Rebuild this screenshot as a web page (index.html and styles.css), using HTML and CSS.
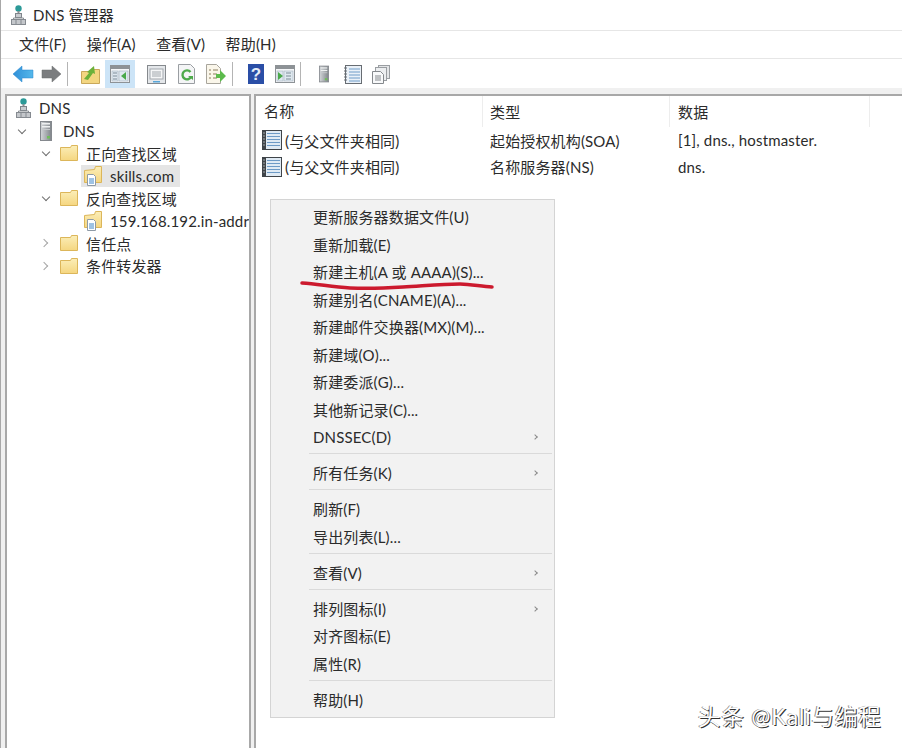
FILE: index.html
```html
<!DOCTYPE html>
<html lang="zh-CN">
<head>
<meta charset="UTF-8">
<meta name="viewport" content="width=device-width, initial-scale=1.0">
<title>DNS 管理器</title>
<link rel="stylesheet" href="styles.css">
</head>
<body>

<!-- Shared icons -->
<svg class="defs" width="0" height="0">
    <defs>
        <linearGradient id="folderFill" x1="0" y1="0" x2="0" y2="1">
            <stop offset="0" stop-color="#fbeeb8"/>
            <stop offset="1" stop-color="#f5d680"/>
        </linearGradient>
        <linearGradient id="blueFill" x1="0" y1="0" x2="1" y2="0">
            <stop offset="0" stop-color="#2f8fd8"/>
            <stop offset="1" stop-color="#55b8ea"/>
        </linearGradient>
        <linearGradient id="towerFill" x1="0" y1="0" x2="1" y2="0">
            <stop offset="0" stop-color="#d4d7da"/>
            <stop offset="1" stop-color="#7f8489"/>
        </linearGradient>
    </defs>
    <symbol id="i-network" viewBox="0 0 15 20">
        <circle cx="7.5" cy="3.5" r="3.2" fill="#2c9a98"/>
        <path d="M7.5 6v4" stroke="#8a8f94" stroke-width="2"/>
        <rect x="4.5" y="8.5" width="6" height="4" fill="#c9ccd0" stroke="#7f858b"/>
        <path d="M2.5 13v2M12.5 13v2M2.5 13h10" stroke="#8a8f94" fill="none"/>
        <rect x="0.5" y="14.5" width="14" height="5" fill="#c4c7cb" stroke="#858a90"/>
        <path d="M5 15v4M10 15v4" stroke="#858a90"/>
    </symbol>
    <symbol id="i-server" viewBox="0 0 12 20">
        <rect x="0.5" y="0.5" width="11" height="19" fill="url(#towerFill)" stroke="#85898e"/>
        <rect x="2" y="2" width="8" height="1.5" fill="#eef0f1"/>
        <rect x="2" y="5" width="8" height="1.5" fill="#eef0f1"/>
        <rect x="2" y="8" width="8" height="1" fill="#c6c9cc"/>
        <rect x="7" y="15" width="3" height="2.5" fill="#6fbf5a"/>
    </symbol>
    <symbol id="i-folder" viewBox="0 0 18 18">
        <path d="M0.5 3.5v13h17V1.5h-6l-1 2z" fill="url(#folderFill)" stroke="#dcb65a"/>
    </symbol>
    <symbol id="i-zone" viewBox="0 0 18 20">
        <path d="M0.5 4.5v12h17V0.5h-6l-1 3z" fill="url(#folderFill)" stroke="#dcb65a"/>
        <path d="M3.5 8.5h6l2 2v9h-8z" fill="#fff" stroke="#8e9aa6"/>
        <path d="M5 13h5M5 15h5M5 17h5" stroke="#3f86c8"/>
    </symbol>
    <symbol id="i-record" viewBox="0 0 20 20">
        <rect x="0.5" y="0.5" width="19" height="19" fill="#dfeaf4" stroke="#3f4449"/>
        <rect x="0" y="0" width="4" height="20" fill="#3f4449"/>
        <path d="M1 3h2M1 6h2M1 9h2M1 12h2M1 15h2" stroke="#a5a9ad"/>
        <path d="M5 3.5h13M5 6.5h13M5 9.5h13M5 12.5h13M5 15.5h13" stroke="#6d9ac6"/>
    </symbol>
    <symbol id="i-pane" viewBox="0 0 20 18">
        <rect x="0.5" y="0.5" width="19" height="17" fill="#f4f6f8" stroke="#8d9296"/>
        <rect x="1" y="1" width="18" height="3" fill="#8d9296"/>
        <rect x="2" y="6" width="6" height="10" fill="#dfe8f0" stroke="#a5b3bf" stroke-width="0.6"/>
        <rect x="9" y="6" width="9" height="10" fill="#dfe9ef" stroke="#a5b3bf" stroke-width="0.6"/>
    </symbol>
</svg>

<div class="window">

    <div class="titlebar">
        <svg class="title-icon"><use href="#i-network"/></svg>
        <span>DNS 管理器</span>
    </div>

    <div class="menubar">
        <span>文件(F)</span>
        <span>操作(A)</span>
        <span>查看(V)</span>
        <span>帮助(H)</span>
    </div>

    <div class="toolbar">
        <div class="tool">
            <svg width="22" height="18" viewBox="0 0 22 18"><path d="M1 9l9-8v4h11v8H10v4z" fill="url(#blueFill)" stroke="#2b86cc" stroke-width="0.5"/></svg>
        </div>
        <div class="tool">
            <svg width="21" height="18" viewBox="0 0 21 18"><path d="M20 9l-9-8v4H1v8h10v4z" fill="#7b7d7f" stroke="#6a6c6e" stroke-width="0.5"/></svg>
        </div>
        <div class="tool-sep"></div>
        <div class="tool">
            <svg width="19" height="20" viewBox="0 0 19 20">
                <path d="M0.5 7.5v12h18V5.5h-7l-1 2z" fill="#f3d681" stroke="#c9a85a"/>
                <path d="M3 15l5-6-2-1 7-6 1 8-2-1-5 7z" fill="#6cb13a"/>
            </svg>
        </div>
        <div class="tool active">
            <svg width="20" height="18"><use href="#i-pane"/><path d="M16 7v8l-5-4z" fill="#4aa94a"/><path d="M3 8h4M3 11h4M3 14h4" stroke="#7d8b97"/></svg>
        </div>
        <div class="tool wide gap">
            <svg width="19" height="19" viewBox="0 0 19 19">
                <rect x="0.5" y="0.5" width="18" height="18" fill="#e4e7ea" stroke="#85898d"/>
                <rect x="3" y="4" width="13" height="10" fill="#f5f6f7" stroke="#a2a8ad"/>
                <path d="M5 7h9M5 9h9M5 11h9" stroke="#a2a8ad"/>
                <rect x="6" y="16" width="7" height="1.5" fill="#58a6d8"/>
            </svg>
        </div>
        <div class="tool wide">
            <svg width="17" height="20" viewBox="0 0 17 20">
                <path d="M0.5 0.5h12l4 4v15H0.5z" fill="#f4f5f6" stroke="#9a9ea2"/>
                <path d="M12.5 8a4.5 4.5 0 1 0 0.5 5" fill="none" stroke="#4eaa4a" stroke-width="2.4"/>
                <path d="M10 12h5v4z" fill="#4eaa4a"/>
            </svg>
        </div>
        <div class="tool wide">
            <svg width="20" height="20" viewBox="0 0 20 20">
                <path d="M0.5 0.5h10l4 4v15H0.5z" fill="#faf6ea" stroke="#a8a59c"/>
                <path d="M3 6h2M7 6h5M3 10h2M7 10h4M3 14h2M7 14h4" stroke="#8a7d5c"/>
                <path d="M10 10h4V6l6 6-6 6v-4h-4z" fill="#5cbb4c"/>
            </svg>
        </div>
        <div class="tool-sep"></div>
        <div class="tool">
            <svg width="16" height="20" viewBox="0 0 16 20">
                <rect width="16" height="20" fill="#2A4EA6"/>
                <text class="help-mark" x="8" y="16">?</text>
            </svg>
        </div>
        <div class="tool">
            <svg width="20" height="18"><use href="#i-pane"/><path d="M3 7v8l5-4z" fill="#4aa94a"/><path d="M11 8h5M11 11h5M11 14h5" stroke="#7d8b97"/></svg>
        </div>
        <div class="tool-sep"></div>
        <div class="tool">
            <svg width="10" height="20"><use href="#i-server"/></svg>
        </div>
        <div class="tool">
            <svg width="18" height="19" viewBox="0 0 18 19">
                <rect x="1.5" y="0.5" width="16" height="18" fill="#eaf1f8" stroke="#676c72"/>
                <path d="M0 3h3M0 6h3M0 9h3M0 12h3M0 15h3" stroke="#676c72"/>
                <path d="M5 4h11M5 7h11M5 10h11M5 13h11M5 16h11" stroke="#6f9cc8"/>
            </svg>
        </div>
        <div class="tool last">
            <svg width="18" height="19" viewBox="0 0 18 19">
                <rect x="6.5" y="0.5" width="11" height="13" fill="#e3e5e7" stroke="#9a9ea2"/>
                <rect x="3.5" y="2.5" width="11" height="13" fill="#eceef0" stroke="#9a9ea2"/>
                <path d="M0.5 6.5h8l3 3v9H0.5z" fill="#f8f9fa" stroke="#85898d"/>
                <path d="M3 11h6M3 13h6M3 15h6" stroke="#85898d"/>
            </svg>
        </div>
    </div>

    <div class="panes">
        <div class="tree">
            <div class="tree-row">
                <svg class="ic-root"><use href="#i-network"/></svg>
                <span class="label-root">DNS</span>
            </div>
            <div class="tree-row">
                <span class="chev open chev-1"></span>
                <svg class="ic-server"><use href="#i-server"/></svg>
                <span class="label-server">DNS</span>
            </div>
            <div class="tree-row">
                <span class="chev open chev-2"></span>
                <svg class="ic-folder"><use href="#i-folder"/></svg>
                <span class="label-folder">正向查找区域</span>
            </div>
            <div class="tree-row">
                <div class="selected">
                    <svg class="ic-zone"><use href="#i-zone"/></svg>
                    <span class="label-zone">skills.com</span>
                </div>
            </div>
            <div class="tree-row">
                <span class="chev open chev-2"></span>
                <svg class="ic-folder"><use href="#i-folder"/></svg>
                <span class="label-folder">反向查找区域</span>
            </div>
            <div class="tree-row zone-row">
                <svg class="ic-zone"><use href="#i-zone"/></svg>
                <span class="label-zone">159.168.192.in-addr</span>
            </div>
            <div class="tree-row">
                <span class="chev closed chev-2"></span>
                <svg class="ic-folder"><use href="#i-folder"/></svg>
                <span class="label-folder">信任点</span>
            </div>
            <div class="tree-row">
                <span class="chev closed chev-2"></span>
                <svg class="ic-folder"><use href="#i-folder"/></svg>
                <span class="label-folder">条件转发器</span>
            </div>
        </div>

        <div class="list">
            <div class="list-head">
                <div class="col-name">名称</div>
                <div class="col-type">类型</div>
                <div class="col-data">数据</div>
            </div>
            <div class="list-row">
                <div class="col-name"><svg class="ic-record"><use href="#i-record"/></svg>(与父文件夹相同)</div>
                <div class="col-type">起始授权机构(SOA)</div>
                <div class="col-data">[1], dns., hostmaster.</div>
            </div>
            <div class="list-row">
                <div class="col-name"><svg class="ic-record"><use href="#i-record"/></svg>(与父文件夹相同)</div>
                <div class="col-type">名称服务器(NS)</div>
                <div class="col-data">dns.</div>
            </div>
        </div>
    </div>
</div>

<!-- Context menu -->
<div class="context-menu">
    <div class="item">更新服务器数据文件(U)</div>
    <div class="item">重新加载(E)</div>
    <div class="item">新建主机(A 或 AAAA)(S)...</div>
    <div class="item">新建别名(CNAME)(A)...</div>
    <div class="item">新建邮件交换器(MX)(M)...</div>
    <div class="item">新建域(O)...</div>
    <div class="item">新建委派(G)...</div>
    <div class="item">其他新记录(C)...</div>
    <div class="item sub">DNSSEC(D)</div>
    <div class="sep"></div>
    <div class="item sub">所有任务(K)</div>
    <div class="sep"></div>
    <div class="item">刷新(F)</div>
    <div class="item">导出列表(L)...</div>
    <div class="sep"></div>
    <div class="item sub">查看(V)</div>
    <div class="sep"></div>
    <div class="item sub">排列图标(I)</div>
    <div class="item">对齐图标(E)</div>
    <div class="item">属性(R)</div>
    <div class="sep"></div>
    <div class="item">帮助(H)</div>
</div>

<!-- Hand drawn underline -->
<svg class="scribble" width="902" height="748">
    <path d="M302 283C318 284 332 287 350 288C370 289 388 288 403 287C422 286 442 284 460 284C472 284 482 287 492 287" />
</svg>

<div class="watermark">头条 @Kali与编程</div>

</body>
</html>
```

FILE: styles.css
```css
/* Page */
html, body {
    margin: 0;
    height: 100%;
    overflow: hidden;
}
body {
    position: relative;
    background-color: #FFFFFF;
    color: #2B2B2B;
    font-family: 'Lato', 'Noto Sans CJK SC', sans-serif;
    font-size: 15px;
    letter-spacing: 0.15px;
}
svg {
    flex-shrink: 0;
}
.defs {
    position: absolute;
}
.window {
    display: flex;
    flex-direction: column;
    height: 748px;
    box-sizing: border-box;
    border-left: 1px solid #A8A8A8;
}

/* Title bar */
.titlebar {
    display: flex;
    align-items: center;
    height: 30px;
    padding-left: 10px;
    border-bottom: 1px solid #E6E6E6;
}
.titlebar span {
    margin-bottom: 2px;
}
.title-icon {
    width: 15px;
    height: 20px;
    margin-right: 7px;
}

/* Menu bar */
.menubar {
    display: flex;
    align-items: center;
    height: 27px;
    padding: 0 0 2px 18px;
    box-sizing: border-box;
    height: 28px;
    gap: 20.5px;
    border-bottom: 1px solid #E6E6E6;
}

/* Toolbar */
.toolbar {
    display: flex;
    align-items: center;
    height: 28px;
    padding: 1px 0 0 7px;
}
.tool {
    display: flex;
    align-items: center;
    justify-content: center;
    width: 29px;
    height: 28px;
}
.tool.wide {
    width: 30px;
}
.tool.gap {
    margin-left: 6px;
}
.tool.last {
    width: 27px;
}
.tool.active {
    width: 30px;
    background-color: #CCE4F7;
}
.tool-sep {
    width: 1px;
    height: 24px;
    margin: 0 8px 0 1px;
    background-color: #B4B4B4;
}
.help-mark {
    fill: #E4ECF8;
    font-family: 'Liberation Sans', sans-serif;
    font-size: 17px;
    font-weight: bold;
    text-anchor: middle;
}

/* Panes */
.panes {
    flex: 1;
    display: flex;
    gap: 3px;
    min-height: 0;
    padding: 6px 0 0 4px;
    background-color: #F0F0F0;
}
.tree {
    width: 246px;
    box-sizing: border-box;
    padding-top: 1px;
    background-color: #FFFFFF;
    border: 2px solid #A8A8A8;
    border-bottom: none;
    overflow: hidden;
}
.list {
    flex: 1;
    background-color: #FFFFFF;
    border: 2px solid #A8A8A8;
    border-width: 2px 0 0 2px;
}

/* Tree rows */
.tree-row {
    position: relative;
    display: flex;
    align-items: center;
    height: 22.5px;
    white-space: nowrap;
}
.chev {
    position: absolute;
    top: 7px;
    width: 5px;
    height: 5px;
    border-right: 1px solid #6E6E6E;
    border-bottom: 1px solid #6E6E6E;
}
.chev.open {
    transform: rotate(45deg);
}
.chev.closed {
    border-color: #A6A6A6;
    transform: rotate(-45deg);
    top: 8px;
    margin-left: -2px;
}
.chev-1 {
    left: 12px;
}
.chev-2 {
    left: 36px;
}
.ic-root {
    width: 15px;
    height: 20px;
    margin: 0 8px 0 9px;
}
.ic-server {
    width: 12px;
    height: 20px;
    margin: 0 11px 0 33px;
}
.ic-folder {
    width: 18px;
    height: 18px;
    margin: 0 8px 0 53px;
}
.ic-zone {
    width: 18px;
    height: 20px;
    margin: 0 8px 0 3px;
}
.zone-row {
    padding-left: 74px;
}
.selected {
    display: flex;
    align-items: center;
    width: 99px;
    height: 22.5px;
    margin-left: 74px;
    background-color: #E5E5E5;
}

/* Record list */
.list-head {
    display: flex;
    align-items: center;
    height: 31px;
}
.list-head .col-name,
.list-head .col-type,
.list-head .col-data {
    height: 31px;
    line-height: 33px;
    border-right: 1px solid #EDEDED;
}
.list-row {
    display: flex;
    align-items: center;
    height: 26.5px;
}
.col-name {
    display: flex;
    align-items: center;
    width: 227px;
    padding-left: 8px;
    box-sizing: border-box;
}
.col-type {
    width: 187px;
    padding-left: 7px;
    box-sizing: border-box;
}
.col-data {
    width: 200px;
    padding-left: 8px;
    box-sizing: border-box;
}
.ic-record {
    width: 20px;
    height: 20px;
    margin: 0 3px 0 -2px;
}

/* Context menu */
.context-menu {
    position: absolute;
    left: 270px;
    top: 199px;
    width: 285px;
    height: 519px;
    box-sizing: border-box;
    padding-top: 4px;
    background-color: #F2F2F2;
    border: 1px solid #D4D4D4;
}
.item {
    position: relative;
    height: 27.5px;
    line-height: 27.5px;
    padding-left: 42px;
    white-space: nowrap;
}
.item.sub::after {
    content: "";
    position: absolute;
    right: 17px;
    top: 11px;
    width: 3px;
    height: 3px;
    border-right: 1px solid #8A8A8A;
    border-top: 1px solid #8A8A8A;
    transform: rotate(45deg);
}
.sep {
    height: 1px;
    margin: 1.5px 2px 6px 38px;
    background-color: #DADADA;
}

/* Overlays */
.scribble {
    position: absolute;
    left: 0;
    top: 0;
}
.scribble path {
    fill: none;
    stroke: #CC1A2E;
    stroke-width: 3.5;
    stroke-linecap: round;
}
.watermark {
    position: absolute;
    left: 698px;
    top: 702px;
    font-size: 22.5px;
    line-height: 30px;
    letter-spacing: 0.9px;
    color: #FFFFFF;
    white-space: nowrap;
    text-shadow: 1px 1px 0 #333333, -1px 0 0 #8A8A8A;
}
```
